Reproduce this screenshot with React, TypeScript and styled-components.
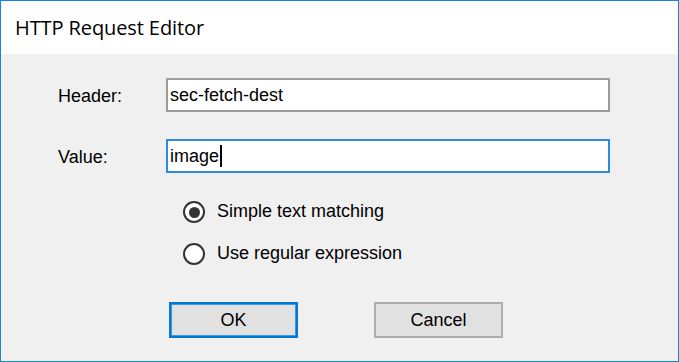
import React from 'react';
import styled, { createGlobalStyle } from 'styled-components';

const GlobalStyle = createGlobalStyle`
  html, body {
    margin: 0;
    padding: 0;
    background: #ffffff;
  }
  * {
    box-sizing: border-box;
  }
`;

// Window frame
const Window = styled.div`
  width: 679px;
  height: 362px;
  border: 1px solid #1883d7;
  background: #f0f0f0;
  display: flex;
  flex-direction: column;
  font-family: 'Liberation Sans', Arial, sans-serif;
  font-size: 18px;
  color: #000;
`;

const TitleBar = styled.div`
  height: 53px;
  background: #ffffff;
  display: flex;
  align-items: center;
  padding-left: 14px;
  padding-bottom: 1px;
`;

const Title = styled.h1`
  margin: 0;
  font-family: 'Open Sans', 'Noto Sans', sans-serif;
  font-size: 20px;
  font-weight: 400;
  letter-spacing: -0.1px;
  color: #000;
`;

const Body = styled.div`
  flex: 1;
  padding: 24px 0 0 57px;
  display: flex;
  flex-direction: column;
`;

const FieldGrid = styled.div`
  display: grid;
  grid-template-columns: 108px 444px;
  row-gap: 27px;
  align-items: center;
`;

const Label = styled.label`
  line-height: 34px;
  height: 34px;
  padding-top: 1px;
`;

const TextBox = styled.div<{ $focused?: boolean }>`
  height: 34px;
  background: #fff;
  border: 2px solid ${p => (p.$focused ? '#2b8ae2' : '#9c9c9c')};
  padding: 0 2px;
  display: flex;
  align-items: center;
  white-space: nowrap;
`;

const Caret = styled.span`
  display: inline-block;
  width: 2px;
  height: 22px;
  background: #000;
  margin-left: 1px;
`;

const RadioGroup = styled.div`
  display: flex;
  flex-direction: column;
  gap: 20px;
  margin: 28px 0 0 125px;
`;

const RadioRow = styled.div`
  display: flex;
  align-items: center;
  gap: 12px;
  height: 22px;
`;

const RadioCircle = styled.span<{ $checked?: boolean }>`
  width: 22px;
  height: 22px;
  border-radius: 50%;
  border: 2px solid #333;
  background: #fff;
  display: flex;
  align-items: center;
  justify-content: center;

  &::after {
    content: '';
    width: 11px;
    height: 11px;
    border-radius: 50%;
    background: ${p => (p.$checked ? '#333' : 'transparent')};
  }
`;

const RadioText = styled.span`
  margin-top: -1px;
`;

const ButtonRow = styled.div`
  display: flex;
  gap: 76px;
  margin: 37px 0 0 111px;
`;

const DialogButton = styled.button<{ $default?: boolean }>`
  width: 129px;
  height: 36px;
  background: #e1e1e1;
  border: 2px solid ${p => (p.$default ? '#0078d7' : '#adadad')};
  box-shadow: ${p => (p.$default ? 'inset 0 0 0 1px #3b96e0' : 'none')};
  font-family: 'Liberation Sans', Arial, sans-serif;
  font-size: 18px;
  color: #000;
  padding: 0;
  cursor: pointer;
`;

export default function App() {
  return (
    <>
      <GlobalStyle />
      <Window>
        <TitleBar>
          <Title>HTTP Request Editor</Title>
        </TitleBar>
        <Body>
          <FieldGrid>
            <Label>Header:</Label>
            <TextBox>sec-fetch-dest</TextBox>
            <Label>Value:</Label>
            <TextBox $focused>
              image
              <Caret />
            </TextBox>
          </FieldGrid>

          <RadioGroup>
            <RadioRow>
              <RadioCircle $checked />
              <RadioText>Simple text matching</RadioText>
            </RadioRow>
            <RadioRow>
              <RadioCircle />
              <RadioText>Use regular expression</RadioText>
            </RadioRow>
          </RadioGroup>

          <ButtonRow>
            <DialogButton $default>OK</DialogButton>
            <DialogButton>Cancel</DialogButton>
          </ButtonRow>
        </Body>
      </Window>
    </>
  );
}
